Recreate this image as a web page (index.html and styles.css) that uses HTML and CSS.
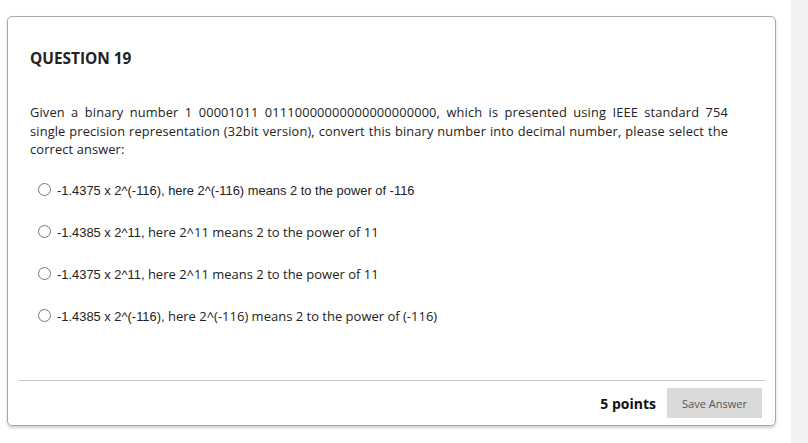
FILE: index.html
```html
<!DOCTYPE html>
<html>
<head>
<meta charset="utf-8">
<link rel="stylesheet" href="styles.css">
</head>
<body>
<div class="page">
  <div class="main">
    <div class="card">
      <h2 class="title">QUESTION 19</h2>
      <p class="question">Given a binary number 1 00001011 01110000000000000000000, which is presented using IEEE standard 754 single precision representation (32bit version), convert this binary number into decimal number, please select the correct answer:</p>
      <ul class="options">
        <li class="option"><span class="radio"></span><span class="label"><span class="arial">-1.4375 x 2^(-116), here 2^(-116) means 2 to the power of -116</span></span></li>
        <li class="option"><span class="radio"></span><span class="label"><span class="arial">-1.4385 x 2^11,</span> here 2^11 means 2 to the power of 11</span></li>
        <li class="option"><span class="radio"></span><span class="label"><span class="arial">-1.4375 x 2^11,</span> here 2^11 means 2 to the power of 11</span></li>
        <li class="option"><span class="radio"></span><span class="label"><span class="arial">-1.4385 x 2^(-116),</span> here 2^(-116) means 2 to the power of (-116)</span></li>
      </ul>
      <div class="footer">
        <span class="points">5 points</span>
        <button class="save">Save Answer</button>
      </div>
    </div>
  </div>
  <div class="scrollbar"></div>
</div>
</body>
</html>
```

FILE: styles.css
```css
html, body {
  margin: 0;
  padding: 0;
  background: #ffffff;
}
body {
  font-family: "Open Sans", sans-serif;
  color: #222;
}
.page {
  display: flex;
  width: 808px;
  height: 443px;
  overflow: hidden;
}
.main {
  flex: 0 0 791px;
  padding: 16px 0 0 7px;
  box-sizing: border-box;
}
.scrollbar {
  flex: 1;
  background: #f1f1f1;
}
.card {
  width: 769px;
  height: 410px;
  box-sizing: border-box;
  border: 1px solid #a8a8a8;
  border-radius: 5px;
  box-shadow: 0 2px 3px rgba(0,0,0,0.18);
  padding: 31px 10px 0 10px;
  display: flex;
  flex-direction: column;
}
.title {
  margin: 0 0 0 12px;
  font-size: 15.4px;
  line-height: 22px;
  font-weight: 700;
  color: #222;
}
.question {
  margin: 33px 37px 0 12px;
  font-size: 12.8px;
  line-height: 18.5px;
  letter-spacing: 0.15px;
  text-align: justify;
  color: #222;
}
.options {
  list-style: none;
  margin: 10px 0 0 20px;
  padding: 0;
}
.option {
  display: flex;
  align-items: center;
  height: 42px;
}
.radio {
  width: 11px;
  height: 11px;
  border: 1px solid #777;
  border-radius: 50%;
  margin-right: 6px;
  flex: none;
}
.label {
  font-size: 13px;
  color: #222;
}
.arial {
  font-family: "Liberation Sans", Arial, sans-serif;
  font-size: 12.9px;
}
.footer {
  margin-top: auto;
  margin-bottom: 7px;
  border-top: 1px solid #cccccc;
  display: flex;
  justify-content: flex-end;
  align-items: center;
  gap: 11px;
  padding: 7px 3px 0 0;
}
.points {
  font-size: 14px;
  font-weight: 700;
  color: #111;
}
.save {
  width: 95px;
  height: 30px;
  border: none;
  background: #dadada;
  color: #555;
  font-family: "Open Sans", sans-serif;
  font-size: 11px;
  padding: 0;
}
```
